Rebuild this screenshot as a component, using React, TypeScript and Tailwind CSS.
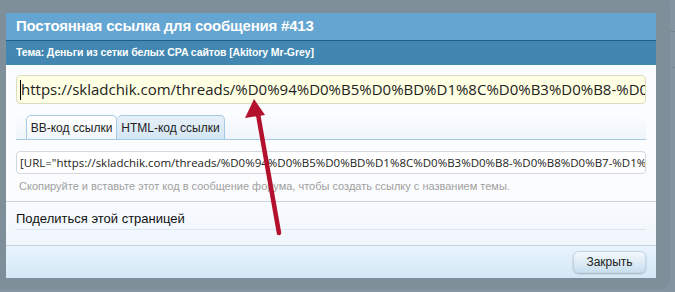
const URL_TEXT =
  'https://skladchik.com/threads/%D0%94%D0%B5%D0%BD%D1%8C%D0%B3%D0%B8-%D0%B8%D0%B7-%D1%81%D0%B5%D1%82%D0%BA%D0%B8.413/'
const BB_TEXT =
  '[URL="https://skladchik.com/threads/%D0%94%D0%B5%D0%BD%D1%8C%D0%B3%D0%B8-%D0%B8%D0%B7-%D1%81%D0%B5%D1%82%D0%BA%D0%B8.413/"]Деньги из сетки белых CPA сайтов [/URL]'

function Arrow() {
  return (
    <svg
      className="pointer-events-none absolute left-0 top-0"
      width="675"
      height="292"
      viewBox="0 0 675 292"
      aria-hidden="true"
    >
      <line x1="279" y1="233" x2="258" y2="114" stroke="#b3112e" strokeWidth="4.5" strokeLinecap="round" />
      <polygon points="254,99 245,118 265,115" fill="#b3112e" />
    </svg>
  )
}

export default function App() {
  return (
    <div className="relative h-[292px] w-[675px] overflow-hidden bg-[#8494a0] font-['Liberation_Sans',Arial,sans-serif]">
      {/* page behind the overlay */}
      <div className="absolute left-0 top-0 flex h-full w-[6px] flex-col text-[12px] text-[#5d6c77]">
        <div className="mt-[132px] h-px w-full bg-[#6f7f8a]" />
        <span className="mt-[20px] leading-none">ас</span>
        <span className="mt-[24px] leading-none">⁝</span>
        <span className="mt-[50px] text-[16px] leading-none">Э</span>
      </div>
      <div className="absolute right-0 top-[31px] h-px w-[20px] bg-[#76868f]" />
      <div className="absolute right-0 top-[67px] w-[20px] border-t border-dashed border-[#76868f]" />

      {/* overlay frame */}
      <div className="absolute left-[-10px] top-[-8px] h-[297px] w-[680px] rounded-[11px] bg-[#7e8f9a]" />

      <div className="relative pl-[6px] pt-[13px]">
        <div className="flex h-[265px] w-[650px] flex-col bg-[#fbfcfe]">
          <div className="flex h-[28px] items-center border-b border-[#1f5f8b] bg-[#64a5d1] pl-[10px] text-[15px] font-bold tracking-[-0.2px] text-white">
            Постоянная ссылка для сообщения #413
          </div>
          <div className="flex h-[24px] items-center bg-[#4187b2] pl-[10px] text-[10.5px] font-bold tracking-[-0.1px] text-white">
            Тема: Деньги из сетки белых CPA сайтов [Akitory Mr-Grey]
          </div>

          <div className="flex flex-col px-[10px] pt-[10px]">
            <div className="flex h-[29px] items-center overflow-hidden whitespace-nowrap rounded-[4px] border border-[#dcdcc4] bg-[#ffffe3] pl-[3px] font-['Open_Sans',sans-serif] text-[15px] text-[#222]">
              <span className="h-[20px] w-px shrink-0 bg-black" />
              {URL_TEXT}
            </div>

            <div className="mt-[11px] flex h-[25px] items-end border-b border-[#a5cae4] bg-gradient-to-b from-[#fbfcfe] to-[#eef5fb] pl-[10px]">
              <div className="flex h-[24px] w-[91px] items-center justify-center rounded-t-[5px] border border-b-0 border-[#a5cae4] bg-gradient-to-b from-white to-[#f0f6fb] text-[12px] text-[#222]">
                BB-код ссылки
              </div>
              <div className="flex h-[24px] w-[108px] items-center justify-center rounded-t-[5px] border border-b-0 border-l-0 border-[#a5cae4] bg-gradient-to-b from-[#e6f0f9] to-[#d4e6f4] text-[12px] text-[#222]">
                HTML-код ссылки
              </div>
            </div>

            <div className="mt-[11px] flex h-[23px] items-center overflow-hidden whitespace-nowrap rounded-[4px] border border-[#d3d8de] bg-white pl-[3px] font-['Open_Sans',sans-serif] text-[11.5px] text-[#222]">
              {BB_TEXT}
            </div>
            <div className="mt-[6px] pl-[3px] text-[11px] leading-[13px] text-[#a0a0a0]">
              Скопируйте и вставьте этот код в сообщение форума, чтобы создать ссылку с названием темы.
            </div>
          </div>

          <div className="mt-[8px] flex flex-col border-t border-[#c9d3dd] bg-gradient-to-b from-[#f9fbfe] to-[#eff6fc] px-[10px]">
            <div className="flex h-[28px] items-center border-b border-[#d8e7f3] pt-[6px] text-[13px] leading-[16px] text-[#111]">
              Поделиться этой страницей
            </div>
            <div className="h-[15px]" />
          </div>

          <div className="flex flex-1 items-center justify-end border-t border-[#c4d0da] bg-gradient-to-b from-[#e9f4fd] to-[#d3e8f7] pr-[10px]">
            <div className="flex h-[22px] w-[73px] items-center justify-center rounded-[6px] border border-[#c3d6e6] bg-gradient-to-b from-[#f5f9fc] to-[#c9dfef] text-[12px] text-[#222] shadow-[0_1px_2px_rgba(0,0,0,0.25)]">
              Закрыть
            </div>
          </div>
        </div>
      </div>

      <Arrow />
    </div>
  )
}
